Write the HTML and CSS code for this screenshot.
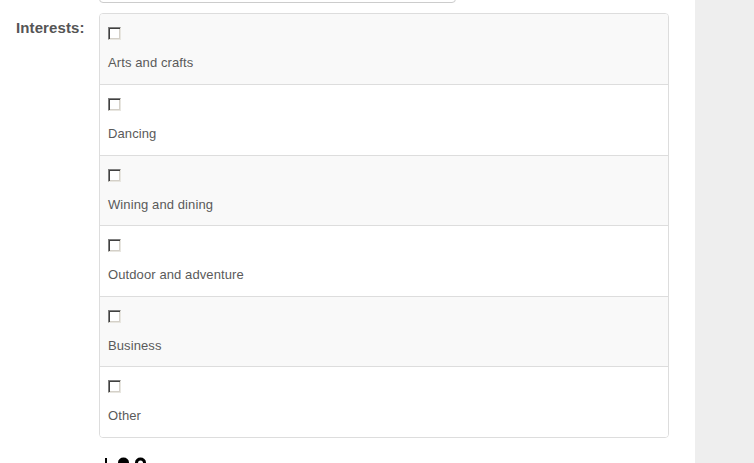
FILE: index.html
```html
<!DOCTYPE html>
<html>
<head>
<meta charset="utf-8">
<link rel="stylesheet" href="styles.css">
</head>
<body>
<div class="page">
  <div class="main">
    <div class="field top-field">
      <div class="field-label"></div>
      <div class="field-control"><div class="text-input"></div></div>
    </div>
    <div class="field">
      <div class="field-label"><span class="label-text">Interests:</span></div>
      <div class="field-control">
        <ul class="choices">
          <li class="choice"><span class="checkbox"></span><span class="choice-text">Arts and crafts</span></li>
          <li class="choice"><span class="checkbox"></span><span class="choice-text">Dancing</span></li>
          <li class="choice"><span class="checkbox"></span><span class="choice-text">Wining and dining</span></li>
          <li class="choice"><span class="checkbox"></span><span class="choice-text">Outdoor and adventure</span></li>
          <li class="choice"><span class="checkbox"></span><span class="choice-text">Business</span></li>
          <li class="choice"><span class="checkbox"></span><span class="choice-text">Other</span></li>
        </ul>
        <div class="tail-icons">
          <svg width="60" height="12" viewBox="0 0 60 12">
            <rect x="6" y="6" width="2" height="6" fill="#000"/>
            <ellipse cx="24.5" cy="10.5" rx="5.5" ry="5" fill="#000"/>
            <ellipse cx="41.5" cy="10.5" rx="5.5" ry="5" fill="#000"/>
            <ellipse cx="41.5" cy="11" rx="2.5" ry="2.5" fill="#fff"/>
          </svg>
        </div>
      </div>
    </div>
  </div>
  <div class="sidebar"></div>
</div>
</body>
</html>
```
FILE: styles.css
```css
html, body {
  margin: 0;
  padding: 0;
  background: #fff;
  overflow: hidden;
}
.page {
  display: flex;
  width: 754px;
  height: 463px;
  font-family: "Liberation Sans", Arial, sans-serif;
}
.main {
  width: 695px;
  flex: none;
}
.sidebar {
  flex: 1;
  background: #eeeeee;
}
.field {
  display: grid;
  grid-template-columns: 99px 570px;
}
.top-field {
  margin-top: -27px;
  margin-bottom: 10px;
}
.field-label {
  padding-left: 16px;
  padding-top: 5px;
}
.label-text {
  font-weight: bold;
  font-size: 15px;
  line-height: 20px;
  color: #555;
  letter-spacing: 0.1px;
}
.text-input {
  width: 355px;
  height: 28px;
  border: 1px solid #cccccc;
  border-radius: 4px;
}
.choices {
  list-style: none;
  margin: 0;
  padding: 0;
  border: 1px solid #dddddd;
  border-radius: 4px;
  overflow: hidden;
}
.choice {
  display: flex;
  flex-direction: column;
  align-items: flex-start;
  height: 70.5px;
  box-sizing: border-box;
  padding: 13px 8px 0;
  border-top: 1px solid #dddddd;
  background: #fff;
}
.choice:first-child {
  border-top: none;
  height: 70px;
  padding-top: 13px;
}
.choice:nth-child(odd) {
  background: #f9f9f9;
}
.checkbox {
  width: 13px;
  height: 13px;
  box-sizing: border-box;
  border-style: solid;
  border-width: 1px;
  border-color: #808080 #e8e6e0 #e8e6e0 #808080;
  box-shadow: inset 1px 1px 0 #404040, inset -1px -1px 0 #d4d0c8;
  background: #fff;
}
.choice-text {
  margin-top: 14px;
  font-size: 13px;
  line-height: 17px;
  color: #5a5a5a;
  letter-spacing: 0.1px;
}
.tail-icons {
  margin-top: 14px;
  height: 12px;
  line-height: 0;
}
```
